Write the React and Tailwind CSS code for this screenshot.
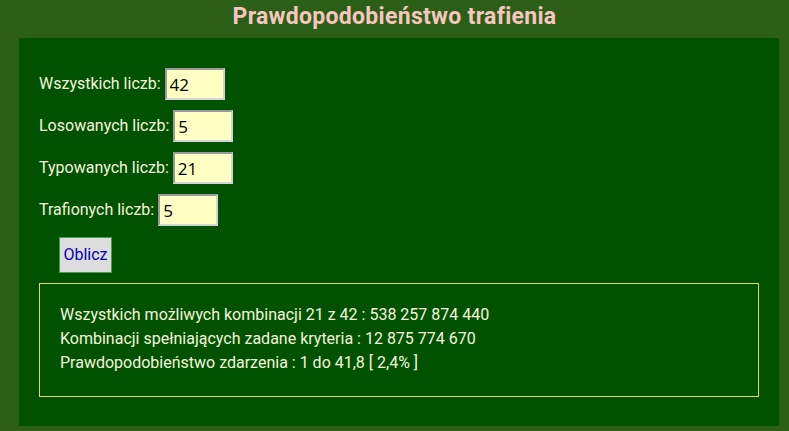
import { useState } from 'react';

// silnia jako BigInt, wystarczy dla małych n
function binom(n, k) {
    if (k < 0 || k > n) return 0n;
    let r = 1n;
    for (let i = 1n; i <= BigInt(k); i++) {
        r = (r * (BigInt(n) - BigInt(k) + i)) / i;
    }
    return r;
}

function groupDigits(v) {
    return v.toString().replace(/\B(?=(\d{3})+(?!\d))/g, ' ');
}

function Field({ label, value, onChange }) {
    return (
        <div className="flex items-center h-[32px]">
            <span>{label}</span>
            <input
                type="text"
                value={value}
                onChange={(e) => onChange(e.target.value)}
                className="ml-[4px] w-[60px] h-[32px] bg-[#ffffc4] text-black text-[17px] pl-[3px] border-2 border-t-[#9a9a9a] border-l-[#9a9a9a] border-r-[#d4d4d4] border-b-[#d4d4d4] outline-none font-['Open_Sans',sans-serif]"
            />
        </div>
    );
}

export default function App() {
    const [all, setAll] = useState('42');
    const [drawn, setDrawn] = useState('5');
    const [typed, setTyped] = useState('21');
    const [hit, setHit] = useState('5');

    const n = parseInt(all, 10) || 0;
    const d = parseInt(drawn, 10) || 0;
    const t = parseInt(typed, 10) || 0;
    const h = parseInt(hit, 10) || 0;

    // liczba wszystkich kombinacji typowanych z n
    const total = binom(n, t);
    // typy zawierające dokładnie h z d wylosowanych
    const good = binom(d, h) * binom(n - d, t - h);
    const ratio = good > 0n ? Number(total) / Number(good) : 0;
    const pct = ratio ? (100 / ratio) : 0;

    return (
        <div className="min-h-screen bg-[#2b5e17] font-['Roboto',sans-serif] pb-[5px]">
            <h1 className="h-[38px] flex items-center justify-center text-[23px] tracking-[0.3px] font-bold text-[#f6c6bf] pb-[3px]">
                Prawdopodobieństwo trafienia
            </h1>
            <div className="ml-[19px] w-[760px] h-[388px] bg-[#015200] pt-[30px] pl-[20px] text-[16px] text-[#f5f5dc]">
                <div className="flex flex-col gap-[10px]">
                    <Field label="Wszystkich liczb:" value={all} onChange={setAll} />
                    <Field label="Losowanych liczb:" value={drawn} onChange={setDrawn} />
                    <Field label="Typowanych liczb:" value={typed} onChange={setTyped} />
                    <Field label="Trafionych liczb:" value={hit} onChange={setHit} />
                </div>
                <button className="mt-[11px] ml-[20px] w-[53px] h-[36px] bg-[#dddddd] border border-[#4c9a4c] text-[#0000b8] text-[16px]">
                    Oblicz
                </button>
                <div className="mt-[10px] w-[720px] h-[114px] border border-[#dede5c] pt-[19px] pl-[20px] leading-[24px]">
                    <div>Wszystkich możliwych kombinacji {t} z {n} : {groupDigits(total)}</div>
                    <div>Kombinacji spełniających zadane kryteria : {groupDigits(good)}</div>
                    <div>
                        Prawdopodobieństwo zdarzenia : 1 do {ratio.toFixed(1).replace('.', ',')} [ {pct.toFixed(1).replace('.', ',')}% ]
                    </div>
                </div>
            </div>
        </div>
    );
}
